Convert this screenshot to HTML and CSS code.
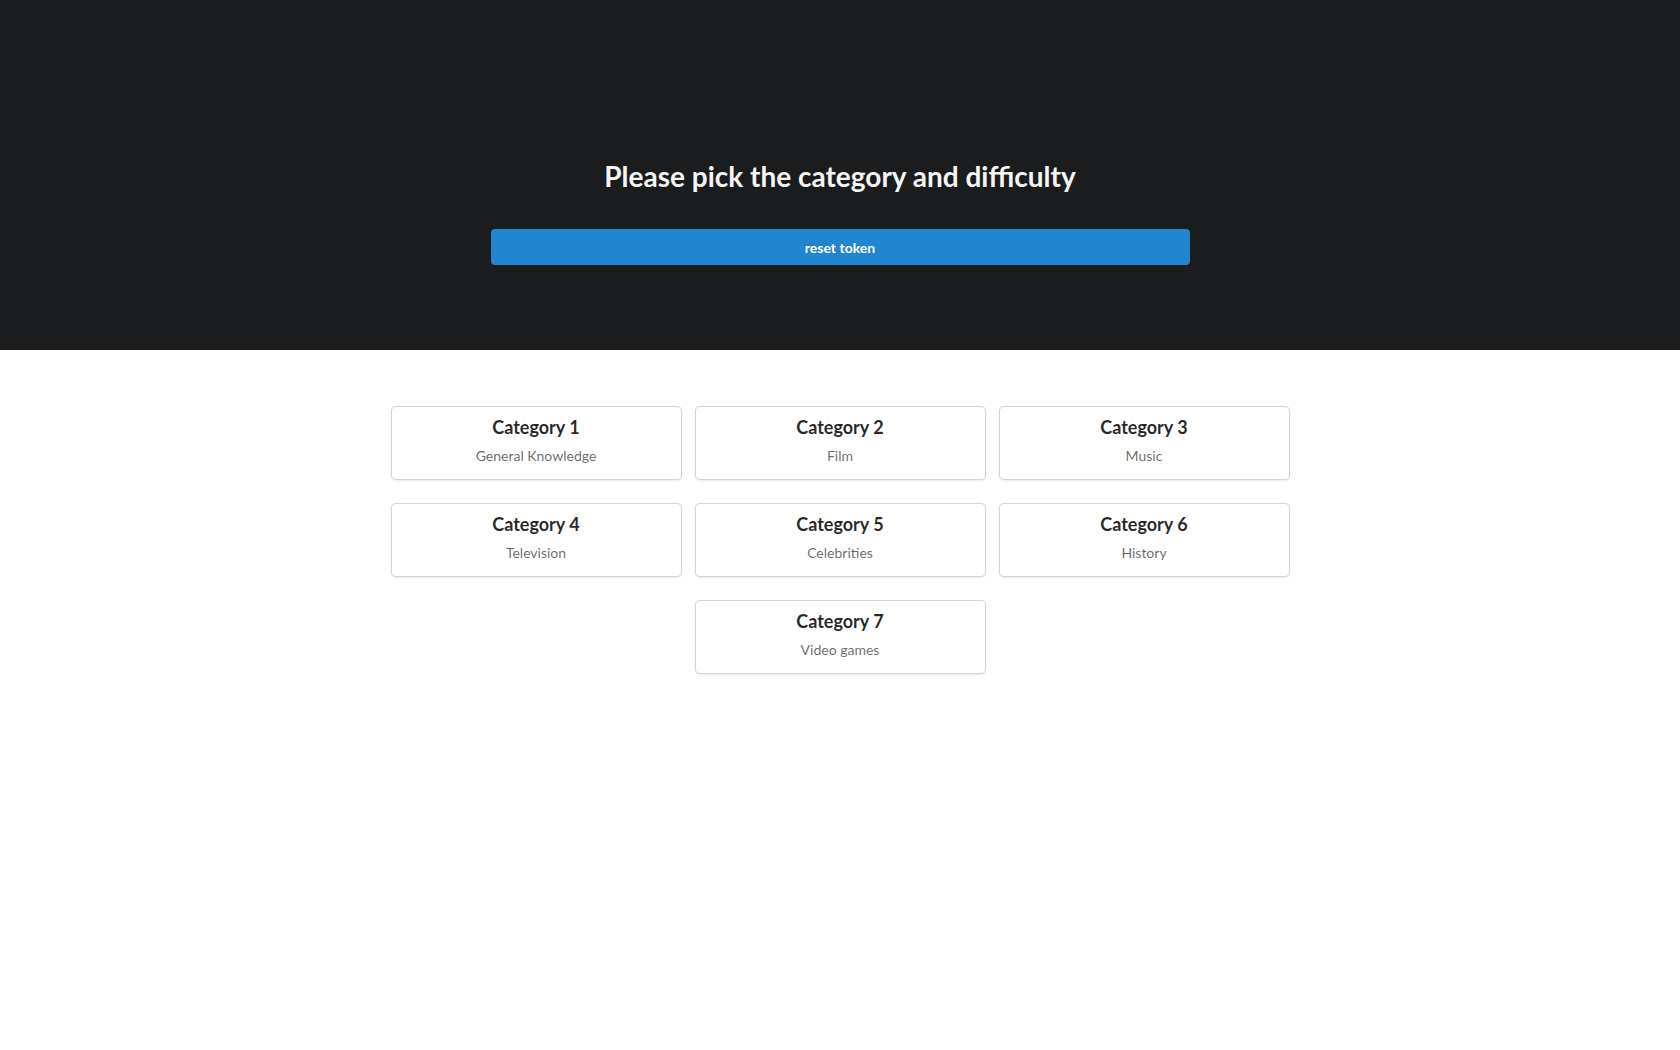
FILE: index.html
```html
<!DOCTYPE html>
<html>
<head>
<meta charset="utf-8">
<link rel="stylesheet" href="styles.css">
</head>
<body>
<header class="hero">
  <h1 class="hero-title">Please pick the category and difficulty</h1>
  <button class="reset-btn">reset token</button>
</header>
<main class="cards">
  <div class="card"><div class="card-title">Category 1</div><div class="card-meta">General Knowledge</div></div>
  <div class="card"><div class="card-title">Category 2</div><div class="card-meta">Film</div></div>
  <div class="card"><div class="card-title">Category 3</div><div class="card-meta">Music</div></div>
  <div class="card"><div class="card-title">Category 4</div><div class="card-meta">Television</div></div>
  <div class="card"><div class="card-title">Category 5</div><div class="card-meta">Celebrities</div></div>
  <div class="card"><div class="card-title">Category 6</div><div class="card-meta">History</div></div>
  <div class="card card-center"><div class="card-title">Category 7</div><div class="card-meta">Video games</div></div>
</main>
</body>
</html>
```
FILE: styles.css
```css
html, body {
  margin: 0;
  padding: 0;
  background: #ffffff;
  font-family: Lato, "Helvetica Neue", Arial, sans-serif;
  font-size: 14px;
  color: rgba(0, 0, 0, 0.87);
}

body {
  min-height: 1050px;
}

.hero {
  background: #1b1c1d;
  height: 350px;
  box-sizing: border-box;
  padding-top: 158px;
  display: flex;
  flex-direction: column;
  align-items: center;
}

.hero-title {
  margin: 0;
  font-size: 28px;
  line-height: 36px;
  font-weight: 700;
  color: #f5f5f5;
}

.reset-btn {
  margin-top: 35px;
  width: 699px;
  height: 36px;
  background: #2185d0;
  color: #ffffff;
  border: none;
  border-radius: 4px;
  font-family: Lato, "Helvetica Neue", Arial, sans-serif;
  font-size: 14px;
  font-weight: 700;
  padding: 0;
  cursor: pointer;
}

.cards {
  width: 897px;
  margin: 57px auto 0;
  padding-bottom: 20px;
  display: grid;
  grid-template-columns: repeat(3, 1fr);
  column-gap: 15px;
  row-gap: 25px;
}

.card {
  height: 72px;
  box-sizing: border-box;
  padding: 9px 14px 0;
  border-radius: 4px;
  background: #fff;
  box-shadow: 0 1px 3px 0 #d4d4d5, 0 0 0 1px #d4d4d5;
  text-align: center;
}

.card-center {
  grid-column: 2;
}

.card-title {
  font-size: 18px;
  line-height: 23px;
  font-weight: 700;
  color: rgba(0, 0, 0, 0.85);
}

.card-meta {
  margin-top: 7px;
  font-size: 14px;
  line-height: 20px;
  color: rgba(0, 0, 0, 0.6);
}
```
